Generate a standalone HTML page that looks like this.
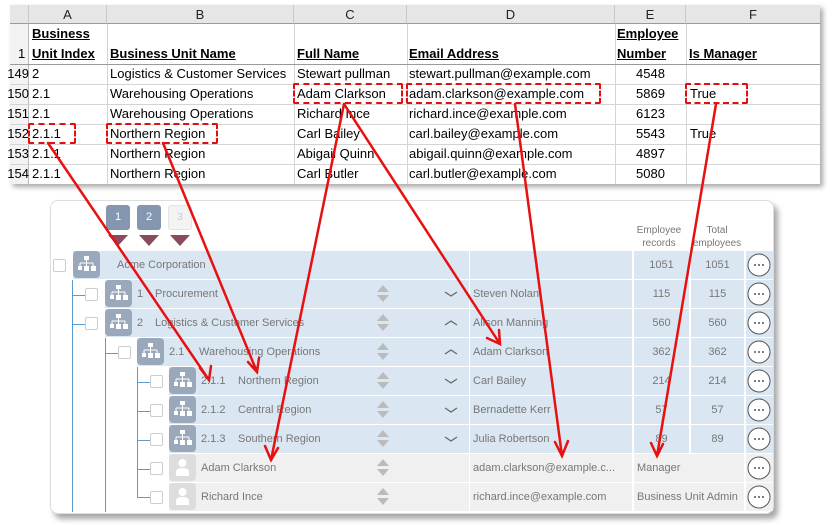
<!DOCTYPE html><html><head><meta charset="utf-8"><style>
*{box-sizing:border-box;margin:0;padding:0}
body{width:830px;height:526px;background:#fff;position:relative;overflow:hidden;font-family:"Liberation Sans",sans-serif}
.a{position:absolute}
#xl{left:10px;top:5px;width:810px;height:179px;background:#fff;box-shadow:3px 3px 5px rgba(0,0,0,.35)}
.xc{position:absolute;font-size:13px;color:#000;white-space:nowrap;line-height:20px}
.hd{background:#e6e6e6;height:19px;top:0;border-right:1px solid #c8c8c8;border-bottom:1px solid #9a9a9a;text-align:center;font-size:13px;line-height:19px;color:#222}
.hl{position:absolute;left:0;width:810px;height:1px;background:#d4d4d4}
.vl{position:absolute;top:19px;width:1px;height:160px;background:#d4d4d4}
.b{font-weight:bold;text-decoration:underline}
.dash{position:absolute;border:2px dashed #e01010;border-radius:2px}
#pn{left:50px;top:200px;width:724px;height:314px;background:#fff;border:1px solid #ddd;border-radius:8px;box-shadow:4px 5px 6px rgba(0,0,0,.35)}
.row{position:absolute;height:28px;font-size:11px;color:#777;line-height:28px;white-space:nowrap}
.blue{background:#dae6f1}
.grey{background:#f0f0f0}
.cb{position:absolute;width:13px;height:13px;border:1px solid #ccc;background:#fff;border-radius:2px}
.ic{position:absolute;width:27px;height:27px;border-radius:4px;background:#9aa8bb}
.icg{background:#ddd}
.num{text-align:center}
</style></head><body>
<div id="xl" class="a">
 <div class="hd a" style="left:0;width:19px;background:#e6e6e6"></div>
 <div class="hd a" style="left:19px;width:78px">A</div>
 <div class="hd a" style="left:97px;width:187px">B</div>
 <div class="hd a" style="left:284px;width:113px">C</div>
 <div class="hd a" style="left:397px;width:208px">D</div>
 <div class="hd a" style="left:605px;width:71px">E</div>
 <div class="hd a" style="left:676px;width:134px;border-right:none">F</div>
 <div class="a" style="left:0;top:19px;width:19px;height:160px;background:#f3f3f3;border-right:1px solid #bbb"></div>
 <div class="vl" style="left:97px"></div><div class="vl" style="left:284px"></div><div class="vl" style="left:397px"></div><div class="vl" style="left:605px"></div><div class="vl" style="left:676px"></div>
 <div class="hl" style="top:59px;background:#9a9a9a"></div><div class="hl" style="top:79px"></div><div class="hl" style="top:99px"></div><div class="hl" style="top:119px"></div><div class="hl" style="top:139px"></div><div class="hl" style="top:159px"></div>
 <div class="xc" style="left:8px;top:39px">1</div>
 <div class="xc b" style="left:22px;top:19px">Business </div>
 <div class="xc b" style="left:22px;top:39px">Unit Index</div>
 <div class="xc b" style="left:100px;top:39px">Business Unit Name</div>
 <div class="xc b" style="left:287px;top:39px">Full Name</div>
 <div class="xc b" style="left:399px;top:39px">Email Address</div>
 <div class="xc b" style="left:607px;top:19px">Employee </div>
 <div class="xc b" style="left:607px;top:39px">Number</div>
 <div class="xc b" style="left:679px;top:39px">Is Manager</div>
 <div class="xc" style="left:-5px;top:59px;width:24px;text-align:right">149</div><div class="xc" style="left:22px;top:59px">2</div><div class="xc" style="left:100px;top:59px">Logistics &amp; Customer Services</div><div class="xc" style="left:287px;top:59px">Stewart pullman</div><div class="xc" style="left:399px;top:59px">stewart.pullman@example.com</div><div class="xc" style="left:626px;top:59px">4548</div>
 <div class="xc" style="left:-5px;top:79px;width:24px;text-align:right">150</div><div class="xc" style="left:22px;top:79px">2.1</div><div class="xc" style="left:100px;top:79px">Warehousing Operations</div><div class="xc" style="left:287px;top:79px">Adam Clarkson</div><div class="xc" style="left:399px;top:79px">adam.clarkson@example.com</div><div class="xc" style="left:626px;top:79px">5869</div><div class="xc" style="left:680px;top:79px">True</div>
 <div class="xc" style="left:-5px;top:99px;width:24px;text-align:right">151</div><div class="xc" style="left:22px;top:99px">2.1</div><div class="xc" style="left:100px;top:99px">Warehousing Operations</div><div class="xc" style="left:287px;top:99px">Richard Ince</div><div class="xc" style="left:399px;top:99px">richard.ince@example.com</div><div class="xc" style="left:626px;top:99px">6123</div>
 <div class="xc" style="left:-5px;top:119px;width:24px;text-align:right">152</div><div class="xc" style="left:22px;top:119px">2.1.1</div><div class="xc" style="left:100px;top:119px">Northern Region</div><div class="xc" style="left:287px;top:119px">Carl Bailey</div><div class="xc" style="left:399px;top:119px">carl.bailey@example.com</div><div class="xc" style="left:626px;top:119px">5543</div><div class="xc" style="left:680px;top:119px">True</div>
 <div class="xc" style="left:-5px;top:139px;width:24px;text-align:right">153</div><div class="xc" style="left:22px;top:139px">2.1.1</div><div class="xc" style="left:100px;top:139px">Northern Region</div><div class="xc" style="left:287px;top:139px">Abigail Quinn</div><div class="xc" style="left:399px;top:139px">abigail.quinn@example.com</div><div class="xc" style="left:626px;top:139px">4897</div>
 <div class="xc" style="left:-5px;top:159px;width:24px;text-align:right">154</div><div class="xc" style="left:22px;top:159px">2.1.1</div><div class="xc" style="left:100px;top:159px">Northern Region</div><div class="xc" style="left:287px;top:159px">Carl Butler</div><div class="xc" style="left:399px;top:159px">carl.butler@example.com</div><div class="xc" style="left:626px;top:159px">5080</div>
 <div class="dash" style="left:283px;top:78px;width:110px;height:21px"></div>
 <div class="dash" style="left:396px;top:78px;width:195px;height:21px"></div>
 <div class="dash" style="left:675px;top:78px;width:63px;height:21px"></div>
 <div class="dash" style="left:18px;top:118px;width:48px;height:21px"></div>
 <div class="dash" style="left:96px;top:118px;width:112px;height:21px"></div>
</div>

<div id="pn" class="a">
 <div class="a" style="left:55px;top:4px;width:24px;height:25px;background:#8597b0;border-radius:3px;color:#fff;font-size:11px;text-align:center;line-height:25px">1</div>
 <div class="a" style="left:86px;top:4px;width:24px;height:25px;background:#8597b0;border-radius:3px;color:#fff;font-size:11px;text-align:center;line-height:25px">2</div>
 <div class="a" style="left:117px;top:4px;width:24px;height:25px;background:#f3f3f3;border:1px solid #e4e4e4;border-radius:3px;color:#ccc;font-size:10px;text-align:center;line-height:23px">3</div>
 <div class="a" style="left:57px;top:34px;width:0;height:0;border-left:10px solid transparent;border-right:10px solid transparent;border-top:11px solid #8a4b5c"></div>
 <div class="a" style="left:88px;top:34px;width:0;height:0;border-left:10px solid transparent;border-right:10px solid transparent;border-top:11px solid #8a4b5c"></div>
 <div class="a" style="left:119px;top:34px;width:0;height:0;border-left:10px solid transparent;border-right:10px solid transparent;border-top:11px solid #8a4b5c"></div>
 <div class="a" style="left:578px;top:23px;width:60px;text-align:center;font-size:10px;color:#777;line-height:13px">Employee<br>records</div>
 <div class="a" style="left:634px;top:23px;width:64px;text-align:center;font-size:10px;color:#777;line-height:13px">Total<br>employees</div>
 <div class="a" style="left:21px;top:79px;width:1px;height:232px;background:#5a9bd0"></div>
 <div class="a" style="left:54px;top:137px;width:1px;height:174px;background:#5a9bd0"></div>
 <div class="a" style="left:86px;top:166px;width:1px;height:130px;background:#5a9bd0"></div>
 <div class="a" style="left:21px;top:94px;width:13px;height:1px;background:#5a9bd0"></div>
 <div class="a" style="left:21px;top:123px;width:13px;height:1px;background:#5a9bd0"></div>
 <div class="a" style="left:54px;top:152px;width:13px;height:1px;background:#5a9bd0"></div>
 <div class="a" style="left:86px;top:181px;width:13px;height:1px;background:#5a9bd0"></div>
 <div class="a" style="left:86px;top:210px;width:13px;height:1px;background:#5a9bd0"></div>
 <div class="a" style="left:86px;top:239px;width:13px;height:1px;background:#5a9bd0"></div>
 <div class="a" style="left:86px;top:268px;width:13px;height:1px;background:#5a9bd0"></div>
 <div class="a" style="left:86px;top:296px;width:13px;height:1px;background:#5a9bd0"></div>
 <div id="rows"></div>
</div>
<script>
var R=[[50,0,'','Acme Corporation','','1051','1051',0,0],[79,1,'1','Procurement','Steven Nolan','115','115',1,'v'],[108,1,'2','Logistics &amp; Customer Services','Alison Manning','560','560',1,'^'],[137,2,'2.1','Warehousing Operations','Adam Clarkson','362','362',1,'^'],[166,3,'2.1.1','Northern Region','Carl Bailey','214','214',1,'v'],[195,3,'2.1.2','Central Region','Bernadette Kerr','57','57',1,'v'],[224,3,'2.1.3','Southern Region','Julia Robertson','89','89',1,'v'],[253,3,'','Adam Clarkson','adam.clarkson@example.c...','Manager','',2,0],[282,3,'','Richard Ince','richard.ince@example.com','Business Unit Admin','',2,0]];
var h='',cbx=[2,34,67,99],icx=[22,54,86,118],nx=[16,18,30,37];
R.forEach(function(r){var t=r[0],l=r[1],p=r[8],g=r[7]==2,c=g?'grey':'blue',x=icx[l];
h+='<div class="cb" style="left:'+cbx[l]+'px;top:'+(t+8)+'px"></div>';
h+='<div class="row '+c+'" style="left:'+x+'px;top:'+t+'px;width:'+(418-x)+'px"></div>';
h+='<div class="ic'+(g?' icg':'')+' a" style="left:'+x+'px;top:'+t+'px">'+(g?'<svg width="27" height="27"><circle cx="13.5" cy="9" r="4" fill="#fff"/><path d="M7 22v-4q0-4 6.5-4t6.5 4v4z" fill="#fff"/></svg>':'<svg width="27" height="27" fill="#fff"><rect x="11" y="5" width="5" height="4"/><path d="M13.5 9v3M7 12h13M7 12v3M13.5 12v3M20 12v3" stroke="#fff" fill="none"/><rect x="5" y="15" width="4" height="4"/><rect x="11" y="15" width="5" height="5"/><rect x="18" y="15" width="5" height="5"/></svg>')+'</div>';
h+='<div class="row" style="left:'+(x+32)+'px;top:'+t+'px">'+r[2]+'</div>';
h+='<div class="row" style="left:'+(x+32+(r[2]?nx[l]:(l==0?12:0)))+'px;top:'+t+'px">'+r[3]+'</div>';
if(l>0){h+='<div class="a" style="left:326px;top:'+(t+5)+'px;width:0;height:0;border-left:6px solid transparent;border-right:6px solid transparent;border-bottom:7px solid #bbb"></div><div class="a" style="left:326px;top:'+(t+15)+'px;width:0;height:0;border-left:6px solid transparent;border-right:6px solid transparent;border-top:7px solid #bbb"></div>';}
if(p)h+='<svg class="a" style="left:393px;top:'+(t+10)+'px" width="14" height="8"><path d="'+(p=='v'?'M1 2L7 6L13 2':'M1 6L7 2L13 6')+'" stroke="#666" stroke-width="1.2" fill="none"/></svg>';
h+='<div class="row '+c+'" style="left:419px;top:'+t+'px;width:162px;padding-left:3px">'+r[4]+'</div>';
if(g){h+='<div class="row '+c+'" style="left:583px;top:'+t+'px;width:110px;padding-left:3px">'+r[5]+'</div>';}
else{h+='<div class="row '+c+' num" style="left:583px;top:'+t+'px;width:55px">'+r[5]+'</div><div class="row '+c+' num" style="left:640px;top:'+t+'px;width:53px">'+r[6]+'</div>';}
h+='<div class="row '+c+'" style="left:695px;top:'+t+'px;width:27px"></div><svg class="a" style="left:696px;top:'+(t+2)+'px" width="24" height="24"><circle cx="12" cy="12" r="11" stroke="#555" fill="#fff" stroke-width="1"/><circle cx="8" cy="12" r="1" fill="#555"/><circle cx="12" cy="12" r="1" fill="#555"/><circle cx="16" cy="12" r="1" fill="#555"/></svg>';
});
document.getElementById('rows').innerHTML=h;
</script>
<svg class="a" style="left:0;top:0" width="830" height="526">
<g stroke="#e81010" stroke-width="2.5" fill="none" stroke-linecap="round">
<path d="M48 143L209 380M200 368L209 380L211 366"/>
<path d="M163 143L257 372M248 362L257 372L259 358"/>
<path d="M344 104L271 460M265 446L271 460L278 448"/>
<path d="M344 104L500 344M487 338L500 344L499 330"/>
<path d="M515 104L562 456M555 442L562 456L568 441"/>
<path d="M716 104L657 456M651 443L657 456L663 444"/>
</g></svg>
</body></html>
